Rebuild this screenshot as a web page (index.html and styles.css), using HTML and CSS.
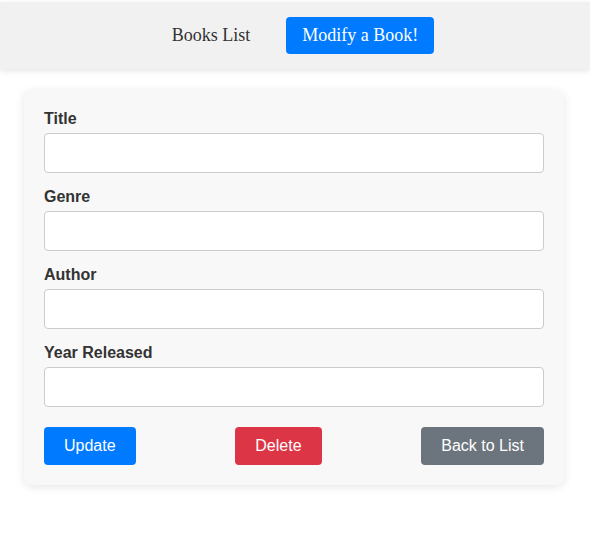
FILE: index.html
```
<!DOCTYPE html>
<html lang="en">
<head>
<meta charset="utf-8">
<title>Modify a Book</title>
<link rel="stylesheet" href="styles.css">
</head>
<body>
<nav class="navbar">
  <a class="nav-link" href="#">Books List</a>
  <a class="nav-link active" href="#">Modify a Book!</a>
</nav>
<main class="card">
  <form class="book-form">
    <div class="form-group">
      <label class="form-label" for="title">Title</label>
      <input class="form-input" id="title" type="text">
    </div>
    <div class="form-group">
      <label class="form-label" for="genre">Genre</label>
      <input class="form-input" id="genre" type="text">
    </div>
    <div class="form-group">
      <label class="form-label" for="author">Author</label>
      <input class="form-input" id="author" type="text">
    </div>
    <div class="form-group">
      <label class="form-label" for="year">Year Released</label>
      <input class="form-input" id="year" type="text">
    </div>
    <div class="actions">
      <button class="btn btn-primary" type="button">Update</button>
      <button class="btn btn-danger" type="button">Delete</button>
      <button class="btn btn-secondary" type="button">Back to List</button>
    </div>
  </form>
</main>
</body>
</html>
```
FILE: styles.css
```
html, body {
  margin: 0;
  padding: 0;
  background: #ffffff;
}

body {
  font-family: "Liberation Serif", "Times New Roman", serif;
  min-height: 537px;
}

.navbar {
  margin-top: 2px;
  background: #f1f1f1;
  padding: 15px;
  display: flex;
  justify-content: center;
  align-items: center;
  gap: 20px;
  box-shadow: 0 2px 6px rgba(0, 0, 0, 0.1);
}

.nav-link {
  font-family: "Liberation Serif", "Times New Roman", serif;
  font-size: 18px;
  color: #333333;
  text-decoration: none;
  padding: 8px 16px;
  border-radius: 4px;
  line-height: 21px;
}

.nav-link.active {
  background: #007bff;
  color: #ffffff;
}

.card {
  box-sizing: border-box;
  width: 540px;
  margin: 21px 0 30px 24px;
  background: #f8f8f8;
  border-radius: 8px;
  padding: 20px 20px 20px;
  box-shadow: 0 2px 10px rgba(0, 0, 0, 0.1);
}

.form-group {
  margin-bottom: 15px;
}

.form-label {
  display: block;
  font-family: "Liberation Sans", Arial, sans-serif;
  font-weight: bold;
  font-size: 16px;
  line-height: 18px;
  color: #333333;
  margin-bottom: 5px;
}

.form-input {
  display: block;
  box-sizing: border-box;
  width: 100%;
  height: 40px;
  padding: 10px;
  font-family: "Liberation Sans", Arial, sans-serif;
  font-size: 16px;
  border: 1px solid #cccccc;
  border-radius: 4px;
  background: #ffffff;
  margin: 0;
}

.actions {
  display: flex;
  justify-content: space-between;
  padding-top: 5px;
}

.btn {
  font-family: "Liberation Sans", Arial, sans-serif;
  font-size: 16px;
  line-height: 18px;
  color: #ffffff;
  border: none;
  border-radius: 4px;
  padding: 10px 20px;
  cursor: pointer;
}

.btn-primary { background: #007bff; }
.btn-danger { background: #dc3545; }
.btn-secondary { background: #6c757d; }
```
